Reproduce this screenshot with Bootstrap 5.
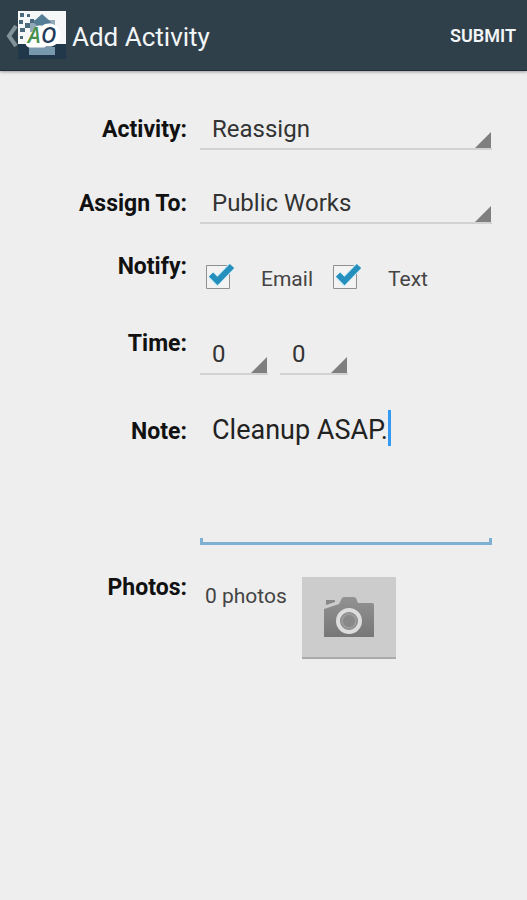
<!DOCTYPE html>
<html lang="en">
<head>
<meta charset="utf-8">
<meta name="viewport" content="width=device-width, initial-scale=1">
<title>Add Activity</title>
<link href="https://cdn.jsdelivr.net/npm/bootstrap@5.3.0/dist/css/bootstrap.min.css" rel="stylesheet">
<style>
  body { background: #eee; color: #1c1c1c; font-family: Roboto, "Liberation Sans", sans-serif; font-size: 23px; line-height: 32px; }
  .action-bar { background: #30404b; color: #f3f6f8; height: 71px; border-bottom: 1px solid #1e2e3a; box-shadow: 0 1px 3px rgba(0,0,0,.35); padding: 0 11px 0 6px; }
  .back-link { color: inherit; }
  .screen-title { font-size: 26px; line-height: 32px; font-weight: 400; padding-top: 4px; margin-left: 6px; }
  .submit-btn { font-size: 18px; line-height: 24px; font-weight: 600; color: inherit; padding: 2px 0 0; }
  .activity-form { padding: 38px 35px 38px 0; }
  .form-line + .form-line { margin-top: 33px; }
  .form-line.notify-line { margin-top: 26px; }
  .form-line.time-line { margin-top: 27px; }
  .form-line.note-line { margin-top: 30px; }
  .form-line.photos-line { margin-top: 26px; }
  .line-label { width: 187px; margin-right: 13px; text-align: right; font-weight: 700; color: #111; padding-top: 5px; }
  .line-label.flush { padding-top: 1px; }
  .note-line .line-label { padding-top: 11px; }
  .spinner {
    appearance: none; border: 0; border-bottom: 2px solid #d2d2d2; border-radius: 0; color: #333;
    height: 41px; padding: 1px 24px 0 12px; font-size: 24px; line-height: 32px;
    background: url("data:image/svg+xml,%3Csvg xmlns='http://www.w3.org/2000/svg' viewBox='0 0 18 18'%3E%3Cpath d='M18 0V18H0z' fill='%237f7f7f'/%3E%3C/svg%3E") right 1px bottom / 18px 18px no-repeat border-box;
  }
  .spinner-short { width: 68px; }
  .time-fields { padding-top: 7px; gap: 12px; }
  .notify-fields { padding: 10px 0 0 5px; height: 50px; }
  .tick {
    appearance: none; width: 30px; height: 28px; margin: 2px 26px 0 0;
    background: url("data:image/svg+xml,%3Csvg xmlns='http://www.w3.org/2000/svg' viewBox='0 0 30 28'%3E%3Cpath d='M1.5 3.5h23v23h-23z' fill='%23f3f3f3' stroke='%23909090'/%3E%3C/svg%3E") center / 30px 28px no-repeat;
  }
  .tick:checked {
    background-image: url("data:image/svg+xml,%3Csvg xmlns='http://www.w3.org/2000/svg' viewBox='0 0 30 28'%3E%3Cpath d='M1.5 3.5h23v23h-23z' fill='%23f3f3f3' stroke='%23909090'/%3E%3Cpath d='M6 13l6 6L26.500 4.500' fill='none' stroke='%23d2eef7' stroke-width='8'/%3E%3Cpath d='M6 12.500l6.500 6.500L27 4' fill='none' stroke='%23258fbd' stroke-width='6'/%3E%3C/svg%3E");
  }
  .small-text { font-size: 21px; line-height: 28px; color: #444; }
  .notify-fields .small-text { padding-top: 5px; }
  .email-text { margin-right: 19px; }
  .note-input {
    display: block; resize: none; width: 100%; height: 140px; border: 0; outline: 0; background: transparent;
    font-size: 27px; line-height: 32px; padding: 9px 12px; color: #222;
  }
  .note-box::after { content: ""; display: block; height: 7px; margin-top: -7px; border: 3px solid #7fb0d3; border-top: 0; }
  .note-caret { position: absolute; left: 188px; top: 5px; width: 3px; height: 36px; background: #3399f3; }
  .camera-btn { width: 94px; height: 82px; background: #ccc; border: 0; border-bottom: 2px solid #aaa; margin: 6px 0 0 15px; }
  .photo-count { padding: 11px 0 0 5px; }
</style>
<script src="https://cdn.jsdelivr.net/npm/bootstrap@5.3.0/dist/js/bootstrap.bundle.min.js"></script>
</head>
<body>
<header class="action-bar d-flex align-items-center">
  <a href="#" class="back-link d-flex align-items-center text-decoration-none" aria-label="Back">
    <svg width="60" height="48" viewBox="0 0 60 48" aria-hidden="true">
      <path d="M10 15L3 25l7 10" fill="none" stroke="#84929a" stroke-width="4"/>
      <path d="M12 0h48v48H12z" fill="#20384a"/>
      <path d="M12 0h48v33H12z" fill="#f5f7f8"/>
      <path d="M24 9h25v12H24z" fill="#8fa9b8"/>
      <path d="M36 3l9 8-9 8-9-8z" fill="#557d95"/>
      <path d="M23 36h26v8H23z" fill="#7898ad"/>
      <path d="M14 2h4v4h-4zM21 3h3v3h-3zM13 9h4v4h-4zM19 12h5v5h-5zM24 8h4v4h-4zM14 17h5v4h-5zM14 25h3v3h-3z" fill="#4a6b7e"/>
      <g stroke="#fff" stroke-width="9" stroke-linejoin="round" fill="#fff"><path d="M24 32L33 19h2l2 13z"/><circle cx="43" cy="24" r="7"/></g>
      <g font-family="Open Sans, sans-serif" font-size="21" font-style="italic" font-weight="600">
        <text x="22" y="32" fill="#46904b">A</text>
        <text x="35" y="32" fill="#233b5a">O</text>
      </g>
    </svg>
  </a>
  <h1 class="screen-title mb-0 me-auto">Add Activity</h1>
  <button type="submit" form="activity" class="submit-btn btn border-0">SUBMIT</button>
</header>
<main>
  <form id="activity" class="activity-form">
    <div class="form-line d-flex">
      <label class="line-label flex-shrink-0" for="kind">Activity:</label>
      <select id="kind" class="spinner flex-grow-1"><option>Reassign</option></select>
    </div>
    <div class="form-line d-flex">
      <label class="line-label flex-shrink-0" for="assignee">Assign To:</label>
      <select id="assignee" class="spinner flex-grow-1"><option>Public Works</option></select>
    </div>
    <div class="form-line notify-line d-flex" role="group" aria-labelledby="notify-label">
      <span id="notify-label" class="line-label flush flex-shrink-0">Notify:</span>
      <div class="notify-fields d-flex align-items-start">
        <input id="email" class="tick" type="checkbox" checked>
        <label for="email" class="small-text email-text">Email</label>
        <input id="text" class="tick" type="checkbox" checked>
        <label for="text" class="small-text">Text</label>
      </div>
    </div>
    <div class="form-line time-line d-flex">
      <label class="line-label flush flex-shrink-0" for="hours">Time:</label>
      <div class="time-fields d-flex">
        <select id="hours" class="spinner spinner-short"><option>0</option></select>
        <select class="spinner spinner-short" aria-label="Minutes"><option>0</option></select>
      </div>
    </div>
    <div class="form-line note-line d-flex">
      <label class="line-label flex-shrink-0" for="note">Note:</label>
      <div class="note-box position-relative flex-grow-1">
        <textarea id="note" class="note-input">Cleanup ASAP.</textarea>
        <span class="note-caret"></span>
      </div>
    </div>
    <div class="form-line photos-line d-flex">
      <label class="line-label flush flex-shrink-0" for="camera">Photos:</label>
      <span class="photo-count small-text">0 photos</span>
      <button id="camera" type="button" class="camera-btn d-flex align-items-center justify-content-center p-0" aria-label="Take photo">
        <svg width="52" height="42" viewBox="0 0 52 42" aria-hidden="true">
          <defs><linearGradient id="body-shade" x1="0" y1="0" x2="0" y2="1"><stop offset="0" stop-color="#929292"/><stop offset="1" stop-color="#777"/></linearGradient></defs>
          <path d="M3 4h9v2L3 9z" fill="#888"/>
          <path d="M1 13L16 8l3-6q1-1 3-1h8q2 0 3 1l2 5h14q2 0 2 2v32H1z" fill="url(#body-shade)"/>
          <circle cx="26" cy="25" r="11" fill="#858585" stroke="#ddd" stroke-width="4"/>
          <circle cx="26" cy="25" r="7" fill="#888" stroke="#9b9b9b" stroke-width="2"/>
        </svg>
      </button>
    </div>
  </form>
</main>
</body>
</html>
